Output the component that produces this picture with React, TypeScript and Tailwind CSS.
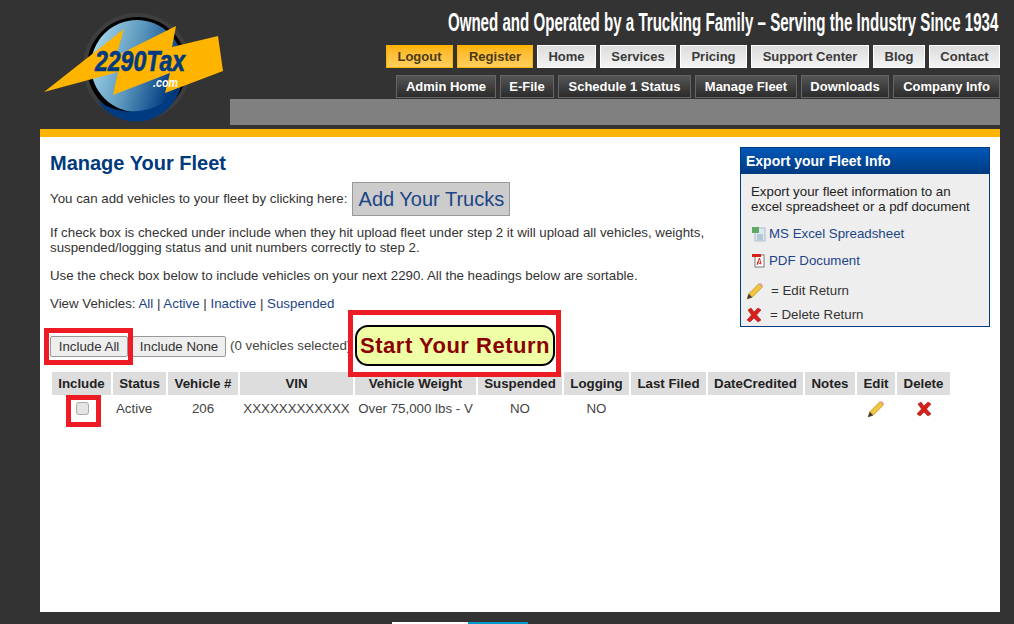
const FONT = "font-['Liberation_Sans',Arial,sans-serif]"

const mainNav = [
  { label: "Logout", w: "w-[67px]", gold: true },
  { label: "Register", w: "w-[76px]", gold: true },
  { label: "Home", w: "w-[59px]", gold: false },
  { label: "Services", w: "w-[76px]", gold: false },
  { label: "Pricing", w: "w-[67px]", gold: false },
  { label: "Support Center", w: "w-[118px]", gold: false },
  { label: "Blog", w: "w-[52px]", gold: false },
  { label: "Contact", w: "w-[71px]", gold: false },
]
const adminNav = [
  { label: "Admin Home", w: "w-[100px]" },
  { label: "E-File", w: "w-[54px]" },
  { label: "Schedule 1 Status", w: "w-[133px]" },
  { label: "Manage Fleet", w: "w-[102px]" },
  { label: "Downloads", w: "w-[88px]" },
  { label: "Company Info", w: "w-[107px]" },
]
const columns = [
  { label: "Include", w: "w-[59px]" },
  { label: "Status", w: "w-[53px]" },
  { label: "Vehicle #", w: "w-[70px]" },
  { label: "VIN", w: "w-[113px]" },
  { label: "Vehicle Weight", w: "w-[121px]" },
  { label: "Suspended", w: "w-[84px]" },
  { label: "Logging", w: "w-[65px]" },
  { label: "Last Filed", w: "w-[75px]" },
  { label: "DateCredited", w: "w-[95px]" },
  { label: "Notes", w: "w-[50px]" },
  { label: "Edit", w: "w-[38px]" },
  { label: "Delete", w: "w-[53px]" },
]

function Logo() {
  return (
    <svg width="230" height="129" viewBox="0 0 230 129" className="block">
      <defs>
        <linearGradient id="globe" x1="0" y1="0" x2="1" y2="0.3">
          <stop offset="0" stopColor="#b5e4f2" />
          <stop offset="0.55" stopColor="#5a96bd" />
          <stop offset="1" stopColor="#003a80" />
        </linearGradient>
      </defs>
      <circle cx="137" cy="67" r="54" fill="#4a4a4a" opacity="0.5" />
      <circle cx="137" cy="67" r="50" fill="#000" />
      <circle cx="137" cy="66" r="46" fill="url(#globe)" />
      <path d="M97 100 A46 46 0 0 0 182 75 A50 40 0 0 1 97 100Z" fill="#003a80" />
      <polygon
        points="44,92 124,29 116,56 176,26 172,47 218,36 223,71 165,93 170,73 113,95 118,72"
        fill="#ffb400"
      />
      <text
        x="95"
        y="71"
        fontFamily="'Liberation Sans',Arial,sans-serif"
        fontWeight="700"
        fontStyle="italic"
        fontSize="30"
        textLength="90"
        lengthAdjust="spacingAndGlyphs"
        fill="#003a80"
        stroke="#003a80"
        strokeWidth="0.7"
      >
        2290Tax
      </text>
      <text
        x="153"
        y="87"
        fontFamily="'Liberation Sans',Arial,sans-serif"
        fontWeight="700"
        fontStyle="italic"
        fontSize="13"
        textLength="25"
        lengthAdjust="spacingAndGlyphs"
        fill="#fff"
      >
        .com
      </text>
    </svg>
  )
}

function Pencil({ size = 18 }: { size?: number }) {
  return (
    <svg width={size} height={size} viewBox="0 0 16 16" className="block">
      <polygon points="1,15 2.5,10.5 11.5,1.5 14.5,4.5 5.5,13.5" fill="#f2c63c" stroke="#a9811c" strokeWidth="0.6" />
      <polygon points="11.5,1.5 13,0.8 15.2,3 14.5,4.5" fill="#e6a0a0" />
      <polygon points="1,15 2.5,10.5 5.5,13.5" fill="#3a3a3a" />
    </svg>
  )
}

function RedX({ size = 16 }: { size?: number }) {
  return (
    <svg width={size} height={size} viewBox="0 0 16 16" className="block">
      <path d="M2 3 L5 1 L8 5 L12 1 L15 3 L10.5 8 L15 13 L12 15 L8 11 L4 15 L1 13 L5.5 8Z" fill="#d8201a" stroke="#a81510" strokeWidth="0.6" />
    </svg>
  )
}

function ExcelIcon() {
  return (
    <svg width="16" height="16" viewBox="0 0 16 16" className="block">
      <rect x="4" y="2" width="10" height="13" fill="#dfe8ee" stroke="#9fb2c0" strokeWidth="0.8" />
      <rect x="1" y="1" width="7" height="6" fill="#5fa866" />
      <path d="M6 9h6M6 11h6M6 13h6" stroke="#8ba7bb" strokeWidth="1" />
    </svg>
  )
}

function PdfIcon() {
  return (
    <svg width="16" height="16" viewBox="0 0 16 16" className="block">
      <rect x="4" y="2" width="9" height="12" fill="#fff" stroke="#555" strokeWidth="0.8" />
      <rect x="1" y="1" width="9" height="3" fill="#d8201a" />
      <path d="M6 12 L8.5 5 L10 11 L6 9" fill="none" stroke="#d8201a" strokeWidth="1" />
    </svg>
  )
}

export default function App() {
  return (
    <div className={`h-[624px] overflow-hidden bg-[#333333] ${FONT} text-[13.3px] text-[#333333]`}>
      <div className="ml-[40px] w-[960px]">
        {/* header */}
        <header className="-ml-[40px] flex h-[129px] w-[1000px]">
          <div className="w-[230px] shrink-0">
            <Logo />
          </div>
          <div className="flex min-w-0 flex-1 flex-col items-end">
            <div className="mt-[9px] mr-[2px] h-[26px] origin-right scale-x-[0.604] whitespace-nowrap text-[25px] leading-[26px] font-bold text-white">
              Owned and Operated by a Trucking Family – Serving the Industry Since 1934
            </div>
            <nav className="mt-[10px] flex gap-[4px]">
              {mainNav.map((item) => (
                <a
                  key={item.label}
                  className={`flex h-[23px] items-center justify-center border text-[13px] font-bold ${item.w} ${
                    item.gold
                      ? "border-[#ffb400] bg-gradient-to-b from-[#ffb400] to-[#ffcf5c] text-[#4a3a10]"
                      : "border-white bg-gradient-to-b from-[#dcdcdc] to-[#f4f4f4] text-[#3a3a3a]"
                  }`}
                >
                  {item.label}
                </a>
              ))}
            </nav>
            <nav className="mt-[7px] flex gap-[4px]">
              {adminNav.map((item) => (
                <a
                  key={item.label}
                  className={`flex h-[23px] items-center justify-center border border-[#666666] bg-gradient-to-b from-[#555555] to-[#2c2c2c] text-[13px] font-bold text-white ${item.w}`}
                >
                  {item.label}
                </a>
              ))}
            </nav>
            <div className="mt-px h-[26px] w-full bg-[#808080]" />
          </div>
        </header>

        <div className="h-[8px] bg-[#ffb400]" />

        {/* content */}
        <main className="h-[475px] bg-white pl-[10px]">
          <div className="flex h-[188px]">
            <div className="w-[680px]">
              <h1 className="pt-[14px] text-[20px] leading-[24px] font-bold text-[#003a7d]">Manage Your Fleet</h1>
              <div className="mt-[7px] flex items-center">
                <span>You can add vehicles to your fleet by clicking here:</span>
                <a className="ml-[5px] flex h-[34px] w-[158px] items-center justify-center border border-[#999999] bg-[#cccccc] text-[20px] text-[#1c4587]">
                  Add Your Trucks
                </a>
              </div>
              <p className="mt-[9px] w-[670px] leading-[15px]">
                If check box is checked under include when they hit upload fleet under step 2 it will upload all
                vehicles, weights, suspended/logging status and unit numbers correctly to step 2.
              </p>
              <p className="mt-[13px] leading-[15px]">
                Use the check box below to include vehicles on your next 2290. All the headings below are sortable.
              </p>
              <p className="mt-[13px] leading-[15px]">
                View Vehicles: <a className="text-[#1c4587]">All</a> | <a className="text-[#1c4587]">Active</a> |{" "}
                <a className="text-[#1c4587]">Inactive</a> | <a className="text-[#1c4587]">Suspended</a>
              </p>
            </div>
            <aside className="mt-[10px] ml-[10px] h-[180px] w-[250px] border border-[#003a80] bg-[#eeeeee] leading-[16px]">
              <div className="flex h-[26px] items-center bg-gradient-to-b from-[#0057b8] to-[#003a80] pl-[5px] text-[14px] font-bold text-white">
                Export your Fleet Info
              </div>
              <p className="mt-[10px] pr-[14px] pl-[10px] leading-[15px] text-[#222222]">
                Export your fleet information to an excel spreadsheet or a pdf document
              </p>
              <a className="mt-[12px] flex items-center pl-[10px] text-[#1c4587]">
                <span className="mr-[2px]">
                  <ExcelIcon />
                </span>
                MS Excel Spreadsheet
              </a>
              <a className="mt-[11px] flex items-center pl-[10px] text-[#1c4587]">
                <span className="mr-[2px]">
                  <PdfIcon />
                </span>
                PDF Document
              </a>
              <div className="mt-[13px] flex items-center pl-[5px]">
                <span className="mr-[7px]">
                  <Pencil />
                </span>
                = Edit Return
              </div>
              <div className="mt-[7px] flex items-center pl-[5px]">
                <span className="mr-[8px]">
                  <RedX />
                </span>
                = Delete Return
              </div>
            </aside>
          </div>

          <div className="flex h-[47px] items-start">
            <div className="relative mt-[11px]">
              <button className="block h-[21px] w-[78px] rounded-[2px] border border-[#999999] bg-[#eeeeee] text-[13.3px] text-[#333333]">
                Include All
              </button>
              <div className="pointer-events-none absolute -top-[8px] -right-[5px] -bottom-[8px] -left-[6px] border-[5px] border-[#ed1c24]" />
            </div>
            <button className="mt-[11px] ml-[4px] h-[21px] w-[94px] rounded-[2px] border border-[#999999] bg-[#eeeeee] text-[13.3px] text-[#333333]">
              Include None
            </button>
            <span className="mt-[13px] ml-[4px] w-[125px] overflow-hidden leading-[16px] whitespace-nowrap text-[#444444]">
              (0 vehicles selected)
            </span>
            <div className="relative">
              <a className="flex h-[41px] w-[200px] items-center justify-center rounded-[13px] border-2 border-black bg-[#efffa6] text-[22px] font-bold tracking-[0.5px] whitespace-nowrap text-[#8b0000]">
                Start Your Return
              </a>
              <div className="pointer-events-none absolute -top-[15px] -right-[6px] -bottom-[11px] -left-[7px] border-[5px] border-[#ed1c24]" />
            </div>
          </div>

          <div className="ml-[2px] flex gap-[2px]">
            {columns.map((col) => (
              <div
                key={col.label}
                className={`flex h-[23px] items-center justify-center bg-[#dddddd] text-[13.3px] font-bold whitespace-nowrap text-[#222222] ${col.w}`}
              >
                {col.label}
              </div>
            ))}
          </div>
          <div className="ml-[2px] flex h-[27px] items-center gap-[2px] text-[#444444]">
            <div className="relative flex w-[59px] justify-center">
              <input
                type="checkbox"
                className="ml-[1px] h-[13px] w-[13px] appearance-none rounded-[3px] border border-[#aaaaaa] bg-[#e4e4e4]"
              />
              <div className="pointer-events-none absolute -top-[7px] -bottom-[12px] left-[14px] w-[35px] border-[5px] border-[#ed1c24]" />
            </div>
            <div className="w-[53px] pl-[3px]">Active</div>
            <div className="w-[70px] text-center">206</div>
            <div className="w-[113px] text-center whitespace-nowrap">XXXXXXXXXXXX</div>
            <div className="w-[121px] text-center whitespace-nowrap">Over 75,000 lbs - V</div>
            <div className="w-[84px] text-center">NO</div>
            <div className="w-[65px] text-center">NO</div>
            <div className="w-[75px]" />
            <div className="w-[95px]" />
            <div className="w-[50px]" />
            <div className="flex w-[38px] justify-center">
              <Pencil />
            </div>
            <div className="flex w-[53px] justify-center">
              <RedX />
            </div>
          </div>
        </main>

        {/* next block just peeking in at the fold */}
        <div className="mt-[10px] ml-[352px] flex h-[2px]">
          <div className="w-[76px] bg-white" />
          <div className="w-[60px] bg-[#0099cc]" />
        </div>
      </div>
    </div>
  )
}
